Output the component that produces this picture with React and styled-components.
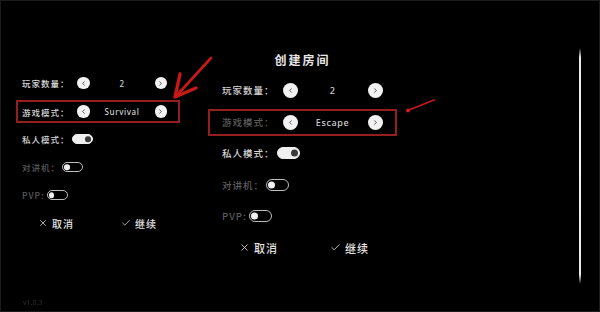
import styled, { createGlobalStyle, ThemeProvider } from 'styled-components'
import { ChevronLeft, ChevronRight, X, Check } from 'lucide-react'

const GlobalStyle = createGlobalStyle`
  html, body {
    margin: 0;
    padding: 0;
    background: #000;
  }
  body {
    font-family: "Noto Sans CJK SC", "Noto Sans", sans-serif;
  }
`

// two copies of the same dialog, the left one a bit smaller
const small = {
  font: 8.5,
  spacing: 1,
  btn: 12.5,
  labelW: 55,
  valueW: 65,
  valueFont: 8,
  rowH: 28,
  toggleW: 21,
  toggleH: 10.5,
  padL: 6,
  boxW: 164,
  actionFont: 10,
  actionPad: 22,
  actionGap: 47,
}

const large = {
  font: 9.5,
  spacing: 1,
  btn: 15,
  labelW: 60.5,
  valueW: 70,
  valueFont: 9,
  rowH: 31.5,
  toggleW: 23,
  toggleH: 12,
  padL: 14,
  boxW: 189,
  actionFont: 11,
  actionPad: 31,
  actionGap: 52,
}

const Screen = styled.div`
  position: relative;
  width: 600px;
  height: 312px;
  box-sizing: border-box;
  border: 1px solid #1c1c1c;
  background: #000;
  display: flex;
  overflow: hidden;
`

const LeftCol = styled.div`
  width: 207px;
  padding: 68px 0 0 15px;
  box-sizing: border-box;
  display: flex;
  flex-direction: column;
`

const RightCol = styled.div`
  flex: 1;
  padding-top: 49px;
  display: flex;
  flex-direction: column;
`

const Rail = styled.div`
  width: 2px;
  height: 236px;
  margin: 47px 18px 0 0;
  border-radius: 1px;
  background: linear-gradient(#000 0%, #e8e8e8 4%, #f4f4f4 50%, #e8e8e8 96%, #000 100%);
`

const Version = styled.div`
  margin-top: auto;
  margin-bottom: 4px;
  padding-left: 7px;
  font-size: 7px;
  color: #2e2e2e;
  font-family: "Noto Sans", sans-serif;
  filter: blur(0.6px);
`

const Panel = styled.div`
  width: ${p => p.theme.boxW}px;
  display: flex;
  flex-direction: column;
`

const Title = styled.div`
  height: 20px;
  margin-bottom: 4.5px;
  text-align: center;
  font-size: 12px;
  font-weight: 700;
  letter-spacing: 2px;
  line-height: 20px;
  color: #e6e6e6;
`

const Row = styled.div`
  height: ${p => p.theme.rowH}px;
  display: flex;
  align-items: center;
  padding-left: ${p => p.theme.padL}px;
  box-sizing: border-box;
`

const BoxRow = styled(Row)`
  height: ${p => p.theme.rowH - 5}px;
  margin: 3px 0 2px;
  padding-left: ${p => p.theme.padL - 2}px;
  border: 2px solid #951f1f;
`

const Label = styled.span`
  flex: none;
  width: ${p => (p.$fixed ? `${p.theme.labelW}px` : 'auto')};
  margin-right: ${p => (p.$fixed ? 0 : 2)}px;
  font-size: ${p => p.theme.font}px;
  font-weight: 500;
  letter-spacing: ${p => p.theme.spacing}px;
  color: ${p => (p.$dim ? '#5c5c5c' : '#d6d6d6')};
  white-space: nowrap;
`

const RoundBtn = styled.div`
  flex: none;
  width: ${p => p.theme.btn}px;
  height: ${p => p.theme.btn}px;
  border-radius: 50%;
  background: #f2f2f2;
  display: flex;
  align-items: center;
  justify-content: center;
  color: #444;
`

const Value = styled.span`
  width: ${p => p.theme.valueW}px;
  text-align: center;
  font-family: "Noto Sans", sans-serif;
  font-size: ${p => p.theme.valueFont}px;
  font-weight: 500;
  letter-spacing: 0.6px;
  color: #cfcfcf;
`

const Toggle = styled.div`
  position: relative;
  flex: none;
  width: ${p => p.theme.toggleW}px;
  height: ${p => p.theme.toggleH}px;
  box-sizing: border-box;
  border-radius: ${p => p.theme.toggleH}px;
  border: 1.5px solid ${p => (p.$on ? '#f0f0f0' : '#bdbdbd')};
  background: ${p => (p.$on ? '#f0f0f0' : '#000')};

  &::after {
    content: '';
    position: absolute;
    top: 50%;
    ${p => (p.$on ? 'right: 1px;' : 'left: 1px;')}
    width: ${p => p.theme.toggleH - 5}px;
    height: ${p => p.theme.toggleH - 5}px;
    transform: translateY(-50%);
    border-radius: 50%;
    background: ${p => (p.$on ? '#3a3a3a' : '#f0f0f0')};
  }
`

const Actions = styled.div`
  height: ${p => p.theme.rowH}px;
  display: flex;
  align-items: center;
  gap: ${p => p.theme.actionGap}px;
  padding-left: ${p => p.theme.actionPad}px;
`

const Action = styled.div`
  display: flex;
  align-items: center;
  gap: 4px;
  font-size: ${p => p.theme.actionFont}px;
  font-weight: 500;
  letter-spacing: 1px;
  color: #e2e2e2;
`

const Overlay = styled.svg`
  position: absolute;
  left: 0;
  top: 0;
  pointer-events: none;
`

const Stepper = ({ label, value, dim, boxed }) => {
  const Wrap = boxed ? BoxRow : Row
  return (
    <Wrap>
      <Label $fixed $dim={dim}>{label}</Label>
      <RoundBtn><ChevronLeft size={7} strokeWidth={3} /></RoundBtn>
      <Value>{value}</Value>
      <RoundBtn><ChevronRight size={7} strokeWidth={3} /></RoundBtn>
    </Wrap>
  )
}

const Switch = ({ label, on, dim }) => (
  <Row>
    <Label $dim={dim}>{label}</Label>
    <Toggle $on={on} />
  </Row>
)

const RoomDialog = ({ size, title, mode, modeDim }) => (
  <ThemeProvider theme={size}>
    <Panel>
      {title && <Title>{title}</Title>}
      <Stepper label="玩家数量：" value="2" />
      <Stepper label="游戏模式：" value={mode} dim={modeDim} boxed />
      <Switch label="私人模式：" on />
      <Switch label="对讲机：" dim />
      <Switch label="PVP:" dim />
      <Actions>
        <Action><X size={size.actionFont} strokeWidth={1.8} />取消</Action>
        <Action><Check size={size.actionFont} strokeWidth={1.8} />继续</Action>
      </Actions>
    </Panel>
  </ThemeProvider>
)

export default function App() {
  return (
    <>
      <GlobalStyle />
      <Screen>
        <LeftCol>
          <RoomDialog size={small} mode="Survival" />
          <Version>v1.0.3</Version>
        </LeftCol>
        <RightCol>
          <RoomDialog size={large} title="创建房间" mode="Escape" modeDim />
        </RightCol>
        <Rail />
        <Overlay width="600" height="312" viewBox="0 0 600 312">
          <g stroke="#c81818" strokeLinecap="round" strokeLinejoin="round" fill="none">
            <line x1="210" y1="57" x2="177" y2="93" strokeWidth="2.6" />
            <polyline points="179,73 174,96 195,87" strokeWidth="3.4" />
            <line x1="433" y1="99" x2="408" y2="109" strokeWidth="1.8" />
          </g>
          <circle cx="407" cy="109.5" r="2" fill="#d01c1c" />
        </Overlay>
      </Screen>
    </>
  )
}
